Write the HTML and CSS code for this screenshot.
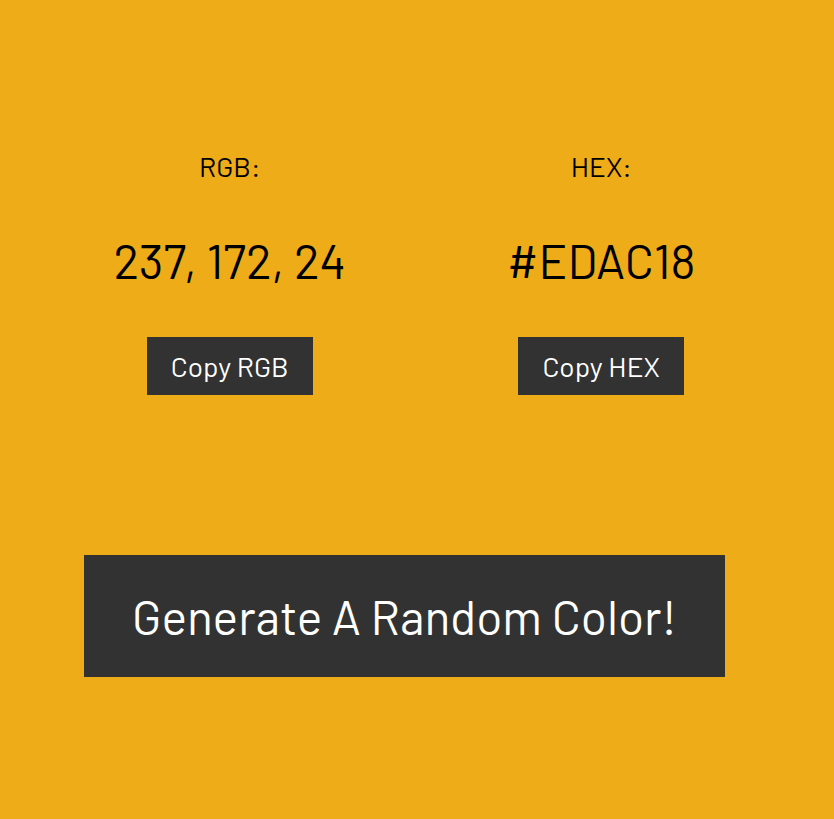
FILE: index.html
```html
<!DOCTYPE html>
<html lang="en">
<head>
<meta charset="utf-8">
<meta name="viewport" content="width=device-width, initial-scale=1">
<title>Random Color Generator</title>
<link rel="stylesheet" href="styles.css">
</head>
<body>
<main class="page">
  <div class="values">
    <section class="value">
      <h2 class="label">RGB:</h2>
      <p class="code">237, 172, 24</p>
      <button class="button" type="button">Copy RGB</button>
    </section>
    <section class="value">
      <h2 class="label">HEX:</h2>
      <p class="code">#EDAC18</p>
      <button class="button" type="button">Copy HEX</button>
    </section>
  </div>
  <button class="button button-large" type="button">Generate A Random Color!</button>
</main>
</body>
</html>
```
FILE: styles.css
```css
* {
  box-sizing: border-box;
}

body {
  margin: 0;
  min-height: 100vh;
  background: #edac18;
  color: #000;
  font-family: Barlow, Roboto, "Liberation Sans", sans-serif;
}

.page {
  display: flex;
  flex-direction: column;
  align-items: center;
  gap: 160px;
  padding: 149px 47px 32px 44px;
}

.values {
  display: grid;
  grid-template-columns: 1fr 1fr;
  align-self: stretch;
}

.value {
  display: flex;
  flex-direction: column;
  align-items: center;
}

.label {
  margin: 0;
  font-size: 28px;
  font-weight: 400;
  line-height: 34px;
}

.code {
  margin: 47px 0;
  font-size: 48px;
  line-height: 60px;
}

.button {
  padding: 12px 24px;
  border: 0;
  background: #323232;
  color: #fff;
  font-family: inherit;
  font-size: 28px;
  line-height: 34px;
  white-space: nowrap;
}

.button-large {
  margin-right: 22px;
  padding: 31px 48px;
  font-size: 48px;
  line-height: 60px;
}
```
